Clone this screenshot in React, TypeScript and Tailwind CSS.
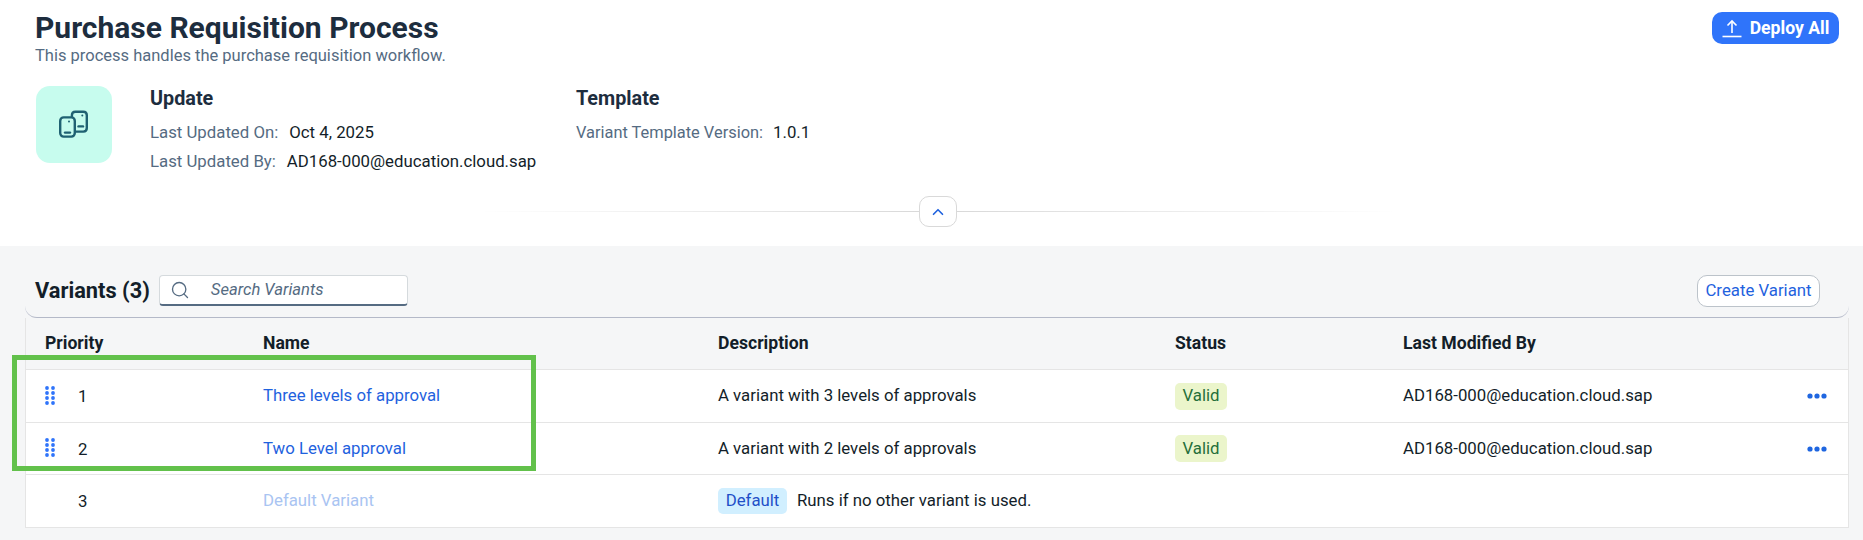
import React from 'react'
import { Search, ChevronUp } from 'lucide-react'

const font = { fontFamily: 'Roboto, "Liberation Sans", sans-serif' }

function PhonesIcon() {
  return (
    <svg width="30" height="30" viewBox="0 0 30 30" fill="none" stroke="#1f6172" strokeWidth="2.4" strokeLinejoin="round" strokeLinecap="round">
      <path d="M12.9 6.8 V5.2 Q12.9 1.7 16.4 1.7 H24.3 Q27.8 1.7 27.8 5.2 V18.1 Q27.8 21.6 24.3 21.6 H17" />
      <rect x="1.2" y="7.4" width="14.6" height="19.2" rx="3.5" />
      <circle cx="10" cy="11.4" r="1" fill="#1f6172" stroke="none" />
      <path d="M6 22.6 H11" />
      <circle cx="23.3" cy="5.6" r="1" fill="#1f6172" stroke="none" />
      <path d="M19.5 16.4 H24" />
    </svg>
  )
}

function DeployIcon() {
  return (
    <svg width="20" height="20" viewBox="0 0 20 20" fill="none" stroke="white" strokeWidth="1.6">
      <path d="M10 15 V3" />
      <path d="M5.5 7.5 L10 3 L14.5 7.5" />
      <path d="M0.5 18.5 H19.5" />
    </svg>
  )
}

function DragHandle() {
  return (
    <svg width="10" height="19" viewBox="0 0 10 19" fill="#2f74fa">
      {[2, 7, 12, 17].map((y) => (
        <React.Fragment key={y}>
          <circle cx="2" cy={y} r="1.9" />
          <circle cx="8" cy={y} r="1.9" />
        </React.Fragment>
      ))}
    </svg>
  )
}

function MoreDots() {
  return (
    <svg width="20" height="6" viewBox="0 0 20 6" fill="#1f66e0">
      <circle cx="3" cy="3" r="2.6" />
      <circle cx="10" cy="3" r="2.6" />
      <circle cx="17" cy="3" r="2.6" />
    </svg>
  )
}

function Row({ priority, name, description, draggable, height }: { priority: number; name: string; description: string; draggable: boolean; height: string }) {
  return (
    <div className={`grid grid-cols-[237px_455px_457px_228px_1fr] items-center bg-white border-b border-[#e5e5e5] text-[16.8px] text-[#131e29] ${height}`}>
      <div className="flex items-center pl-[19px] pt-[2px]">
        <div className="w-[33px] flex mb-[4px]">{draggable && <DragHandle />}</div>
        <span>{priority}</span>
      </div>
      {draggable ? (
        <a className="text-[#1f62de]">{name}</a>
      ) : (
        <span className="text-[#a9c4f2]">{name}</span>
      )}
      {draggable ? (
        <span>{description}</span>
      ) : (
        <div className="flex items-center gap-[10px] whitespace-nowrap">
          <span className="h-[26px] w-[69px] flex items-center justify-center rounded-[5px] bg-[#d1efff] text-[#1f50c8]">Default</span>
          <span>{description}</span>
        </div>
      )}
      {draggable ? (
        <span className="h-[27px] w-[52px] flex items-center justify-center rounded-[5px] bg-[#ebf5cb] text-[#256f3a]">Valid</span>
      ) : (
        <span />
      )}
      {draggable ? (
        <div className="flex items-center justify-between pr-[21px]">
          <span>AD168-000@education.cloud.sap</span>
          <MoreDots />
        </div>
      ) : (
        <span />
      )}
    </div>
  )
}

function App() {
  return (
    <div className="relative h-[540px] overflow-hidden bg-[#f5f6f7]" style={font}>
      {/* Process header */}
      <div className="h-[246px] bg-white pl-[36px] pr-[24px]">
        <div className="flex items-start justify-between">
          <div className="pt-[11px] -ml-[1px]">
            <h1 className="text-[30px] leading-[34px] font-bold text-[#1d2d3e]">Purchase Requisition Process</h1>
            <p className="mt-[1px] text-[16.5px] leading-[20px] text-[#556b82]">This process handles the purchase requisition workflow.</p>
          </div>
          <button className="mt-[12px] h-[32px] w-[127px] flex items-center justify-center gap-[8px] rounded-[10px] bg-[#2f74fa] text-[17.6px] font-bold text-white">
            <DeployIcon />
            Deploy All
          </button>
        </div>

        <div className="mt-[20px] flex">
          <div className="h-[77px] w-[76px] flex items-center justify-center rounded-[14px] bg-[#c7fcee]">
            <PhonesIcon />
          </div>
          <div className="ml-[38px] w-[426px] pt-[1px]">
            <h2 className="text-[19.8px] leading-[24px] font-bold text-[#1d2d3e]">Update</h2>
            <div className="mt-[10px] flex h-[24px] items-center gap-[11px] text-[16.8px]">
              <span className="text-[#556b82]">Last Updated On:</span>
              <span className="text-[#131e29]">Oct 4, 2025</span>
            </div>
            <div className="mt-[5px] flex h-[24px] items-center gap-[11px] text-[16.8px]">
              <span className="text-[#556b82]">Last Updated By:</span>
              <span className="text-[#131e29]">AD168-000@education.cloud.sap</span>
            </div>
          </div>
          <div className="pt-[1px]">
            <h2 className="text-[19.8px] leading-[24px] font-bold text-[#1d2d3e]">Template</h2>
            <div className="mt-[10px] flex h-[24px] items-center gap-[10px] text-[16.8px]">
              <span className="text-[16.4px] text-[#556b82]">Variant Template Version:</span>
              <span className="text-[#131e29]">1.0.1</span>
            </div>
          </div>
        </div>

        {/* Collapse handle */}
        <div className="mt-[22px] flex items-center justify-center">
          <div className="h-[1px] w-[440px] bg-gradient-to-r from-transparent to-[#d9d9d9]" />
          <button className="h-[31px] w-[38px] flex items-center justify-center rounded-[10px] border border-[#d9d9d9] bg-white">
            <ChevronUp size={18} color="#1f62de" strokeWidth={2.2} />
          </button>
          <div className="h-[1px] w-[440px] bg-gradient-to-l from-transparent to-[#d9d9d9]" />
        </div>
      </div>

      {/* Variants */}
      <div className="pl-[25px] pr-[14px] pt-[29px]">
        <div className="h-[43px] flex items-start justify-between rounded-b-[12px] border-b border-[#b4b9c8] pl-[10px] pr-[29px]">
          <div className="flex items-center gap-[9px]">
            <h2 className="text-[21.8px] leading-[31px] font-bold text-[#131e29]">Variants (3)</h2>
            <div className="h-[31px] w-[249px] flex items-center gap-[21px] rounded-[4px] border border-[#d5dadd] border-b-2 border-b-[#556b82] bg-white pl-[10px]">
              <Search size={20} color="#556b82" strokeWidth={1.6} />
              <span className="text-[16.6px] italic text-[#556b82]">Search Variants</span>
            </div>
          </div>
          <button className="h-[32px] w-[123px] rounded-[10px] border border-[#bcc3ca] bg-white text-[16.8px] text-[#1f62de]">Create Variant</button>
        </div>

        <div className="border-x border-[#e5e5e5]">
          <div className="grid grid-cols-[237px_455px_457px_228px_1fr] h-[52px] items-center border-b border-[#e5e5e5] text-[17.6px] font-bold text-[#131e29]">
            <span className="pl-[19px]">Priority</span>
            <span>Name</span>
            <span>Description</span>
            <span>Status</span>
            <span>Last Modified By</span>
          </div>
          <Row height="h-[53px]" priority={1} name="Three levels of approval" description="A variant with 3 levels of approvals" draggable />
          <Row height="h-[52px]" priority={2} name="Two Level approval" description="A variant with 2 levels of approvals" draggable />
          <Row height="h-[53px]" priority={3} name="Default Variant" description="Runs if no other variant is used." draggable={false} />
        </div>
      </div>

      {/* Highlight box drawn over the first two rows */}
      <div className="absolute left-[12px] top-[355px] h-[116px] w-[524px] border-[5px] border-[#62c14b]" />
    </div>
  )
}

export default App
